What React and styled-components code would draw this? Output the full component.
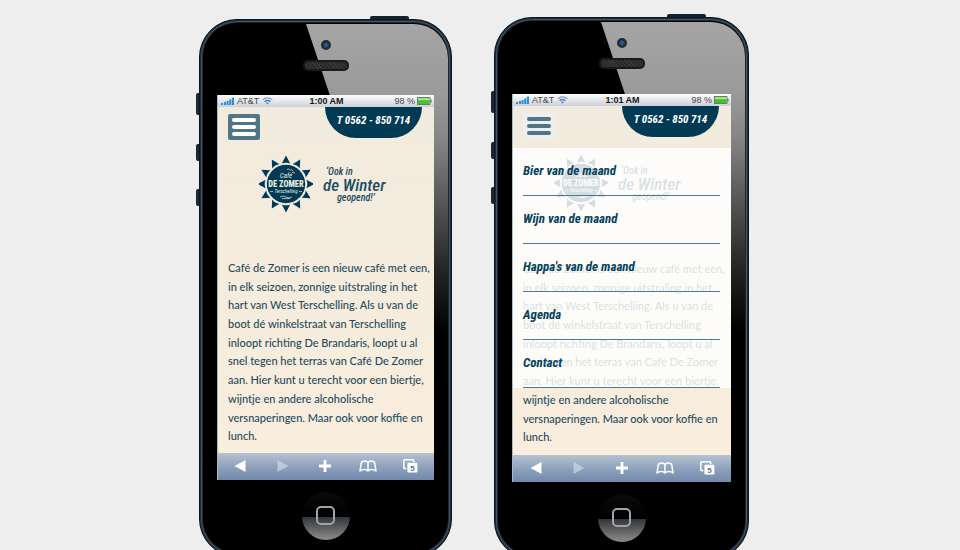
import React from "react";
import styled, { createGlobalStyle, css } from "styled-components";

const navy = "#003a54";
const slate = "#507585";
const script = `"Roboto Condensed", Roboto, sans-serif`;

const GlobalStyle = createGlobalStyle`
  * { box-sizing: border-box; }
  body {
    margin: 0;
    background: #eeeeee;
    font-family: Lato, sans-serif;
  }
  button {
    margin: 0;
    padding: 0;
    border: 0;
    background: none;
    cursor: pointer;
  }
  svg { display: block; }
`;

const Stage = styled.main`
  display: flex;
  justify-content: center;
  align-items: flex-start;
  gap: 42px;
  height: 100vh;
  padding: 17px 12px 0 0;
  overflow: hidden;
`;

const Shell = styled.section`
  position: relative;
  display: flex;
  flex: none;
  flex-direction: column;
  align-items: center;
  margin-top: ${(p) => (p.$low ? "2px" : "0")};
  padding: 20px 17px 16px;
  border: 1px solid #0c1621;
  border-radius: 38px;
  background: #000;
  box-shadow: inset 0 0 0 1px #1d2c3a, inset 0 0 0 2px #465563, inset 0 0 0 3px #1a2632;
`;

const Glare = styled.div`
  position: absolute;
  inset: 4px 3px;
  border-radius: 34px;
  background: linear-gradient(#a5a5a5, #9a9a9a 70px, #868686 115px, #555 180px, #222 250px, #000 310px);
  clip-path: polygon(103px 0, 100% 0, 100% 100%, 280px 100%);
`;

const SideKey = styled.span`
  position: absolute;
  left: -4px;
  top: ${(p) => p.$top};
  width: 3px;
  height: ${(p) => p.$size};
  border-radius: 2px 0 0 2px;
  background: #1b2833;
`;

const PowerKey = styled.span`
  position: absolute;
  right: 42px;
  top: -4px;
  width: 39px;
  height: 3px;
  border-radius: 2px 2px 0 0;
  background: #14242f;
`;

const Camera = styled.span`
  position: relative;
  width: 10px;
  height: 10px;
  border: 2px solid #26282c;
  border-radius: 50%;
  background: radial-gradient(#2c6aa6, #14283e);
`;

const Speaker = styled.span`
  position: relative;
  width: 46px;
  height: 11px;
  margin: 10px 0 ${(p) => (p.$low ? "24px" : "25px")};
  border: 2px solid #1a1a1a;
  border-radius: 5px;
  background: repeating-linear-gradient(45deg, #3a3a3a 0 1px, #2a2a2a 1px 3px);
`;

const Screen = styled.div`
  position: relative;
  width: ${(p) => (p.$wide ? "219px" : "217px")};
  border-left: 1px solid #a9bcc6;
  background: linear-gradient(#f1ebdf, #f5ecdd 45%, #faeedd);
`;

const StatusBar = styled.div`
  display: grid;
  grid-template-columns: 1fr auto 1fr;
  align-items: center;
  height: 12px;
  padding: 0 2px 0 3px;
  background: linear-gradient(#fbfcfd, #cdd1d7);
  color: #4a4a4a;
  font: 9px/12px "Liberation Sans", sans-serif;
`;

const StatusGroup = styled.span`
  display: flex;
  align-items: center;
  justify-content: ${(p) => (p.$end ? "flex-end" : "flex-start")};
  gap: ${(p) => (p.$end ? "2px" : "3px")};
`;

const Clock = styled.time`
  color: #161616;
  font-weight: 700;
`;

const Header = styled.header`
  display: flex;
  justify-content: space-between;
  align-items: flex-start;
  height: 42px;
  padding: 0 12px 0 10px;
`;

const MenuButton = styled.button`
  display: flex;
  flex-direction: column;
  align-items: center;
  justify-content: center;
  gap: 3px;
  width: 32px;
  height: 26px;
  margin-top: 7px;
  border-radius: 2px;
  background: ${slate};
  color: #fff;
  ${(p) => p.$open && css`
    background: #eeeeee;
    color: ${slate};
  `}
`;

const Bar = styled.span`
  width: 24px;
  height: 4px;
  border-radius: 2px;
  background: currentColor;
`;

const Phone = styled.a`
  width: 97px;
  height: 31px;
  border-radius: 0 0 34px 34px;
  background: ${navy};
  color: #fff;
  font: italic 700 11px/28px ${script};
  text-align: center;
  text-decoration: none;
`;

const Brand = styled.div`
  display: flex;
  padding: 6px 0 0 41px;
  gap: 10px;
`;

const Slogan = styled.p`
  display: flex;
  flex-direction: column;
  margin: 0;
  padding-top: 11px;
  color: #1b4d63;
  font: italic 500 10px/12px ${script};
  white-space: nowrap;
`;

const SloganPart = styled.span`
  padding-left: ${(p) => p.$indent};
`;

const SloganMain = styled.strong`
  font-size: 17px;
  font-weight: 500;
  line-height: 14px;
`;

const Intro = styled.p`
  margin: 0;
  padding: ${(p) => (p.$low ? "48px 2px 8px 10px" : "46px 2px 7px 10px")};
  color: #1f4c60;
  font-size: 11px;
  font-weight: 500;
  line-height: 1.7;
`;

const Menu = styled.nav`
  position: absolute;
  top: 54px;
  left: 0;
  right: 0;
  padding: 0 11px 0 10px;
  background: rgba(255, 255, 255, 0.83);
`;

const MenuLink = styled.a`
  display: block;
  height: 48px;
  border-bottom: 1px solid #4d7b8e;
  color: #06425a;
  font: italic 700 13px/45px ${script};
  text-decoration: none;
`;

const Toolbar = styled.div`
  display: grid;
  grid-template-columns: repeat(5, 1fr);
  height: 27px;
  padding: 0 2px 0 1px;
  background: linear-gradient(#b6c2d2, #8fa2bd 50%, #7189ac);
`;

const Tool = styled.button`
  display: grid;
  place-items: center;
  color: #fff;
  opacity: ${(p) => (p.disabled ? 0.4 : 1)};
`;

const Home = styled.button`
  display: grid;
  place-items: center;
  width: 48px;
  height: 48px;
  margin-top: 12px;
  border-radius: 50%;
  background: linear-gradient(#0a0a0a, #000 52%, #33373b 53%, #8c8c8c);
`;

const HomeMark = styled.span`
  width: 19px;
  height: 19px;
  border: 2px solid #a3a3a3;
  border-radius: 5px;
`;

const Signal = () => (
  <svg width="13" height="8" viewBox="0 0 13 8" fill="#2f8fdc" aria-hidden="true">
    <rect x="0" y="6" width="2" height="2" />
    <rect x="3" y="5" width="2" height="3" />
    <rect x="5.6" y="4" width="2" height="4" />
    <rect x="8.2" y="2.4" width="2" height="5.6" />
    <rect x="10.8" y="0.6" width="2.2" height="7.4" />
  </svg>
);

const Wifi = () => (
  <svg width="11" height="8" viewBox="0 0 11 8" fill="none" stroke="#3b86cf" aria-hidden="true">
    <path d="M.7 2.9Q5.5-1.2 10.3 2.9" stroke="#8aa0b4" strokeWidth="1.2" />
    <path d="M2.6 4.8Q5.5 2.3 8.4 4.8" strokeWidth="1.5" />
    <path d="M3.9 5.8h3.2L5.5 7.6Z" fill="#2c79c8" stroke="none" />
  </svg>
);

const Battery = () => (
  <svg width="15" height="8" viewBox="0 0 15 8" aria-hidden="true">
    <rect x=".5" y=".5" width="12.4" height="7" fill="#fff" stroke="#6d7a6d" />
    <rect x="13" y="2.6" width="1.6" height="3" fill="#6d7a6d" />
    <rect x="1" y="1" width="11.4" height="6" fill="#45c326" />
    <rect x="1" y="1.2" width="11.4" height="2" fill="#a8ea92" />
  </svg>
);

const rays = Array.from({ length: 12 }, (_, i) => i * 30);

const Sun = () => (
  <svg width="54" height="58" viewBox="-27 -29 54 58" role="img" aria-label="Café De Zomer Terschelling">
    <g fill={navy}>
      {rays.map((angle) => (
        <path key={angle} d="M-4.2-20.4Q0-22.2 4.2-20.4L0-28.4Z" transform={`rotate(${angle})`} />
      ))}
      <circle r="19.2" />
    </g>
    <g fill="#f1ebdf" textAnchor="middle" fontFamily="Roboto Condensed, Roboto, sans-serif">
      <text y="-5.6" fontStyle="italic" fontSize="7">Café</text>
      <text y="3.2" fontWeight="800" fontSize="8.4">DE ZOMER</text>
      <text y="8.8" fontStyle="italic" fontSize="5">Terschelling</text>
    </g>
    <g fill="none" stroke="#f1ebdf" strokeWidth=".7">
      <path d="M1-14.5q2-1.5 3 .6q2-1 3.2 1.2M6-11.5q2-.6 3 .8" />
      <path d="M-16 7.6h3M13 7.6h3M-6 13q3-2 6 0t6 0M-4 14.6h8" />
    </g>
  </svg>
);

const Arrow = ({ forward }) => (
  <svg width="12" height="12" viewBox="0 0 12 12" fill="currentColor" aria-hidden="true">
    <path d={forward ? "M.5 0 11.5 6 .5 12Z" : "M11.5 0 .5 6 11.5 12Z"} />
  </svg>
);

const Plus = () => (
  <svg width="12" height="12" viewBox="0 0 12 12" aria-hidden="true">
    <path d="M6 0v12M0 6h12" stroke="currentColor" strokeWidth="2.8" />
  </svg>
);

const Book = () => (
  <svg width="18" height="12" viewBox="0 0 18 12" fill="none" stroke="currentColor" strokeWidth="1.5" strokeLinejoin="round" aria-hidden="true">
    <path d="M9 11V3.4C8.6.2 3 .2 2.2 3.2L1 11C3 8.9 7.4 8.9 9 11c1.6-2.1 6-2.1 8 0L15.8 3.2C15 .2 9.4.2 9 3.4" />
  </svg>
);

const Pages = () => (
  <svg width="15" height="14" viewBox="0 0 15 14" aria-hidden="true">
    <path d="M3.4 9.6H1.8Q.8 9.6.8 8.6V1.8Q.8.8 1.8.8h8Q10.8.8 10.8 1.8V3" fill="none" stroke="currentColor" strokeWidth="1.5" />
    <rect x="4.4" y="3.8" width="10" height="9.6" rx="1.2" fill="currentColor" />
    <text x="9.4" y="11.6" textAnchor="middle" fontFamily="Liberation Sans, sans-serif" fontWeight="700" fontSize="8" fill="#61789c">5</text>
  </svg>
);

const menuItems = ["Bier van de maand", "Wijn van de maand", "Happa's van de maand", "Agenda", "Contact"];

function Device({ time, open }) {
  return (
    <Shell $low={!open}>
      <PowerKey />
      <SideKey $top="73px" $size="22px" />
      <SideKey $top="124px" $size="17px" />
      <SideKey $top="169px" $size="17px" />
      <Glare />
      <Camera />
      <Speaker $low={!open} />
      <Screen $wide={open}>
        <StatusBar>
          <StatusGroup><Signal />AT&amp;T <Wifi /></StatusGroup>
          <Clock>{time}</Clock>
          <StatusGroup $end>98 %<Battery /></StatusGroup>
        </StatusBar>
        <Header>
          <MenuButton type="button" aria-label="Menu" aria-expanded={open} $open={open}>
            <Bar /><Bar /><Bar />
          </MenuButton>
          <Phone href="tel:0562850714">T 0562 - 850 714</Phone>
        </Header>
        <Brand>
          <Sun />
          <Slogan>
            <SloganPart $indent="3px">‘Ook in</SloganPart>
            <SloganMain>de Winter</SloganMain>
            <SloganPart $indent="14px">geopend!’</SloganPart>
          </Slogan>
        </Brand>
        <Intro $low={open}>
          Café de Zomer is een nieuw café met een, in elk seizoen, zonnige uitstraling in het hart van
          West Terschelling. Als u van de boot dé winkelstraat van Terschelling inloopt richting De
          Brandaris, loopt u al snel tegen het terras van Café De Zomer aan. Hier kunt u terecht voor
          een biertje, wijntje en andere alcoholische versnaperingen. Maar ook voor koffie en lunch.
        </Intro>
        {open && (
          <Menu aria-label="Menu">
            {menuItems.map((item) => <MenuLink key={item} href="#">{item}</MenuLink>)}
          </Menu>
        )}
        <Toolbar>
          <Tool type="button" aria-label="Vorige"><Arrow /></Tool>
          <Tool type="button" aria-label="Volgende" disabled><Arrow forward /></Tool>
          <Tool type="button" aria-label="Toevoegen"><Plus /></Tool>
          <Tool type="button" aria-label="Bladwijzers"><Book /></Tool>
          <Tool type="button" aria-label="Pagina's"><Pages /></Tool>
        </Toolbar>
      </Screen>
      <Home type="button" aria-label="Home"><HomeMark /></Home>
    </Shell>
  );
}

export default function App() {
  return (
    <Stage>
      <GlobalStyle />
      <Device time="1:00 AM" open={false} />
      <Device time="1:01 AM" open />
    </Stage>
  );
}
